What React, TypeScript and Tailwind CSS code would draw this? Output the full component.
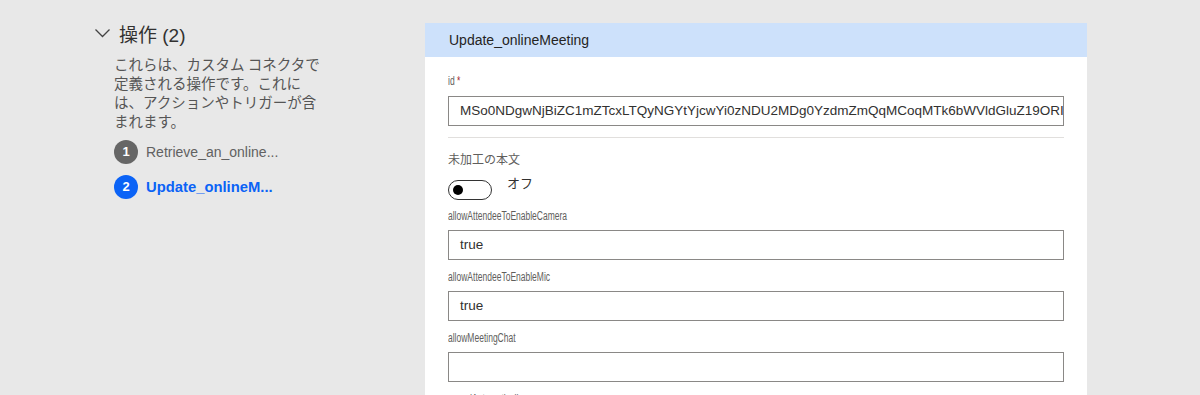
import React from 'react';

const Label = ({ children }: { children: React.ReactNode }) => (
    <div className="h-[20px] leading-[20px] text-[12.5px] text-[#605e5c] font-['Liberation_Sans',sans-serif] whitespace-nowrap">
        <span className="inline-block origin-left scale-x-[0.68]">{children}</span>
    </div>
);

const Field = ({ label, value }: { label: string; value?: string }) => (
    <div className="mt-[7px]">
        <Label>{label}</Label>
        <div className="mt-[4px] h-[30px] border border-[#8a8886] pl-[11px] flex items-center text-[13.5px] text-[#323130] font-['Liberation_Sans',sans-serif]">
            {value}
        </div>
    </div>
);

const StepBadge = ({ n, active }: { n: number; active?: boolean }) => (
    <span className={`w-[24px] h-[24px] rounded-full flex items-center justify-center text-white text-[13px] font-bold ${active ? 'bg-[#0b63f6]' : 'bg-[#666666]'}`}>
        {n}
    </span>
);

const App: React.FC = () => {
    return (
        <div className="w-[1200px] h-[395px] overflow-hidden bg-[#e8e8e8] flex font-['Liberation_Sans','Noto_Sans_CJK_JP',sans-serif]">
            {/* left: operation list */}
            <div className="w-[330px] ml-[95px] pt-[24px] shrink-0">
                <div className="flex items-center h-[24px]">
                    <svg width="15" height="9" viewBox="0 0 15 9" className="mb-[6px]">
                        <polyline points="0.5,0.5 7.5,7.5 14.5,0.5" fill="none" stroke="#444" strokeWidth="1.3" />
                    </svg>
                    <span className="ml-[9px] text-[19px] text-[#323130]">操作 (2)</span>
                </div>
                <div className="pl-[19px]">
                    <p className="mt-[6px] text-[14.5px] leading-[19px] text-[#555555] font-['Noto_Sans_CJK_JP',sans-serif]">
                        これらは、カスタム コネクタで<br />
                        定義される操作です。これに<br />
                        は、アクションやトリガーが含<br />
                        まれます。
                    </p>
                    <div className="mt-[10px] flex items-center gap-[8px] h-[24px]">
                        <StepBadge n={1} />
                        <span className="text-[14px] text-[#616161]">Retrieve_an_online...</span>
                    </div>
                    <div className="mt-[11px] flex items-center gap-[8px] h-[24px]">
                        <StepBadge n={2} active />
                        <span className="text-[14.8px] font-bold text-[#0b63f6]">Update_onlineM...</span>
                    </div>
                </div>
            </div>

            {/* right: action card */}
            <div className="mt-[23px] w-[662px] bg-white shrink-0">
                <div className="h-[34px] bg-[#cde1fb] pl-[24px] flex items-center text-[14px] text-[#252423] font-['Liberation_Sans',sans-serif]">
                    Update_onlineMeeting
                </div>
                <div className="px-[23px] pt-[14px]">
                    <Label>
                        id <span className="text-[#a4262c]">*</span>
                    </Label>
                    <div className="mt-[5px] h-[30px] border border-[#8a8886] pl-[11px] flex items-center overflow-hidden whitespace-nowrap text-[13.5px] text-[#323130] font-['Liberation_Sans',sans-serif]">
                        MSo0NDgwNjBiZC1mZTcxLTQyNGYtYjcwYi0zNDU2MDg0YzdmZmQqMCoqMTk6bWVldGluZ19ORI
                    </div>
                    <div className="mt-[11px] h-px bg-[#e1dfdd]" />
                    <div className="mt-[11px] h-[20px] leading-[20px] text-[12px] text-[#605e5c] font-['Noto_Sans_CJK_JP',sans-serif]">
                        未加工の本文
                    </div>
                    <div className="mt-[11px] flex items-start">
                        <span className="w-[44px] h-[20px] rounded-full border border-[#333333] flex items-center pl-[4px]">
                            <span className="w-[10px] h-[10px] rounded-full bg-black" />
                        </span>
                        <span className="ml-[15px] -mt-[5px] leading-[16px] text-[13px] text-[#323130] font-['Noto_Sans_CJK_JP',sans-serif]">
                            オフ
                        </span>
                    </div>
                    <div className="-mt-[1px]">
                        <Field label="allowAttendeeToEnableCamera" value="true" />
                    </div>
                    <Field label="allowAttendeeToEnableMic" value="true" />
                    <Field label="allowMeetingChat" />
                    <div className="mt-[7px]">
                        <Label>recordAutomatically</Label>
                    </div>
                </div>
            </div>
        </div>
    );
};

export default App;
